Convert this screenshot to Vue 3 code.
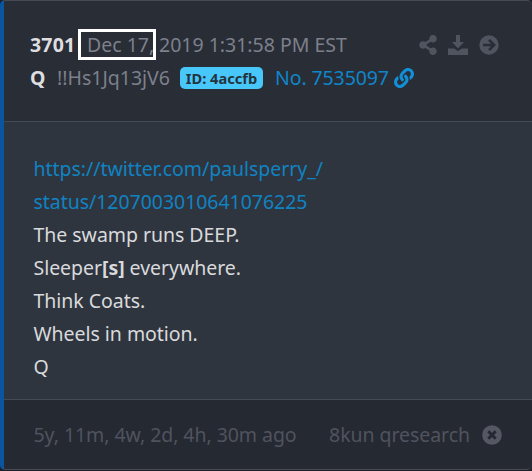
<script setup>
const post = {
  number: "3701",
  month: "Dec 17,",
  time: "2019 1:31:58 PM EST",
  name: "Q",
  trip: "!!Hs1Jq13jV6",
  id: "4accfb",
  no: "7535097",
  age: "5y, 11m, 4w, 2d, 4h, 30m ago",
  board: "8kun qresearch",
};
const link = ["https://twitter.com/paulsperry_/", "status/1207003010641076225"];
</script>

<template>
  <article class="post">
    <header class="head">
      <div class="row">
        <b class="number">{{ post.number }}</b>
        <span class="marked">{{ post.month }}</span>
        <span class="time">{{ post.time }}</span>
        <div class="actions">
          <svg class="share" viewBox="0 0 448 512">
            <path d="M352 320c-22.600 0-43.400 7.800-59.800 20.900l-102.500-64.100a96.600 96.600 0 0 0 0-41.600l102.500-64.100C308.600 184.200 329.400 192 352 192c53 0 96-43 96-96S405 0 352 0s-96 43-96 96c0 7.200.8 14.100 2.300 20.800l-102.500 64.100C139.400 167.800 118.600 160 96 160c-53 0-96 43-96 96s43 96 96 96c22.600 0 43.400-7.800 59.800-20.900l102.500 64.100A96 96 0 1 0 352 320z" />
          </svg>
          <svg class="download" viewBox="0 0 20 20">
            <path d="M8 0h4v7h4l-6 6.500-6-6.500h4zM0 13.500h6l4 2.500 4-2.500h6v6.500H0z" />
          </svg>
          <svg class="arrow" viewBox="0 0 20 20">
            <circle cx="10" cy="10" r="9.700" />
            <path class="cut" d="M4 10h11M10 4.800l5.200 5.200-5.200 5.200" />
          </svg>
        </div>
      </div>
      <div class="row">
        <b class="name">{{ post.name }}</b>
        <span class="trip">{{ post.trip }}</span>
        <span class="badge">ID: {{ post.id }}</span>
        <a class="no">No. {{ post.no }}</a>
        <svg class="chain" viewBox="0 0 512 512">
          <path d="M326.612 185.391c59.747 59.809 58.927 155.698.36 214.590-.11.120-.240.250-.36.370l-67.200 67.200c-59.270 59.270-155.699 59.262-214.960 0-59.270-59.260-59.270-155.700 0-214.960l37.106-37.106c9.840-9.840 26.786-3.300 27.294 10.606.648 17.722 3.826 35.527 9.690 52.721 1.986 5.822.567 12.262-3.783 16.612l-13.087 13.087c-28.026 28.026-28.905 73.660-1.155 101.960 28.024 28.579 74.086 28.749 102.325.51l67.200-67.190c28.191-28.191 28.073-73.757 0-101.830-3.701-3.694-7.429-6.564-10.341-8.569a16.037 16.037 0 0 1-6.947-12.606c-.396-10.567 3.348-21.456 11.698-29.806l21.054-21.055c5.521-5.521 14.182-6.199 20.584-1.731a152.482 152.482 0 0 1 20.522 17.197zM467.547 44.449c-59.261-59.262-155.690-59.270-214.960 0l-67.200 67.200c-.12.120-.250.250-.36.370-58.566 58.892-59.387 154.781.36 214.590a152.454 152.454 0 0 0 20.521 17.196c6.402 4.468 15.064 3.789 20.584-1.731l21.054-21.055c8.350-8.350 12.094-19.239 11.698-29.806a16.037 16.037 0 0 0-6.947-12.606c-2.912-2.005-6.640-4.875-10.341-8.569-28.073-28.073-28.191-73.639 0-101.830l67.200-67.190c28.239-28.239 74.300-28.069 102.325.51 27.750 28.300 26.872 73.934-1.155 101.960l-13.087 13.087c-4.350 4.350-5.769 10.790-3.783 16.612 5.864 17.194 9.042 34.999 9.690 52.721.509 13.906 17.454 20.446 27.294 10.606l37.106-37.106c59.271-59.259 59.271-155.699.001-214.959z" />
        </svg>
      </div>
    </header>

    <section class="body">
      <a v-for="part in link" :key="part" class="line">{{ part }}</a>
      <p class="line">The swamp runs DEEP.</p>
      <p class="line">Sleeper<b>[s]</b> everywhere.</p>
      <p class="line">Think Coats.</p>
      <p class="line">Wheels in motion.</p>
      <p class="line">Q</p>
    </section>

    <footer class="foot">
      <span class="age">{{ post.age }}</span>
      <span class="board">{{ post.board }}</span>
      <svg class="close" viewBox="0 0 20 20">
        <circle cx="10" cy="10" r="9.800" />
        <path class="cut" d="M6.300 6.300l7.400 7.400M13.700 6.300l-7.400 7.400" />
      </svg>
    </footer>
  </article>
</template>

<style>
body {
  margin: 0;
  background: #1e2028;
}
</style>

<style scoped>
.post {
  box-sizing: border-box;
  height: 470px;
  display: flex;
  flex-direction: column;
  overflow: hidden;
  border-left: 4px solid #0b55a0;
  border-top: 1px solid #454a54;
  border-bottom: 1px solid #454a54;
  border-radius: 5px;
  background: #2f353f;
  color: #d9dadc;
  font-family: "Noto Sans", sans-serif;
  font-size: 19.5px;
  line-height: 33px;
  white-space: nowrap;
}

.head {
  box-sizing: border-box;
  height: 121px;
  padding: 27px 33px 0 26px;
  border-bottom: 1px solid #454b55;
  background: #292d36;
  color: #7d808c;
}

.row {
  display: flex;
  align-items: center;
  height: 33px;
}

.number,
.name {
  color: #dedee0;
}

.number {
  width: 48px;
  letter-spacing: 0.2px;
}

/* white frame round the date */
.marked {
  box-sizing: border-box;
  width: 78px;
  height: 31px;
  padding-left: 6px;
  border: 3px solid #fff;
  line-height: 26px;
}

.time {
  margin-left: 3px;
}

.actions {
  display: flex;
  align-items: center;
  gap: 11px;
  margin-left: auto;
}

svg {
  flex: none;
  width: 20px;
  height: 20px;
  fill: #50545f;
}

.share {
  width: 18px;
}

.cut {
  fill: none;
  stroke: #292d36;
  stroke-width: 2.6;
}

.name {
  width: 27px;
}

.trip {
  width: 123px;
}

.badge {
  box-sizing: border-box;
  width: 83px;
  height: 22px;
  border-radius: 5px;
  background: #48c7fb;
  color: #23343f;
  font-size: 14.6px;
  font-weight: bold;
  line-height: 23px;
  text-align: center;
}

.no {
  width: 119px;
  margin-left: 12px;
  color: #0f86ca;
  letter-spacing: -0.1px;
}

.chain {
  fill: #128fd6;
}

.body {
  box-sizing: border-box;
  height: 277px;
  padding: 30px 30px 0 29.5px;
  letter-spacing: -0.04px;
}

.line {
  display: block;
  margin: 0;
}

a.line {
  color: #0f83c2;
}

.foot {
  box-sizing: border-box;
  flex: 1;
  display: flex;
  align-items: center;
  padding: 0 30px 0 29.5px;
  border-top: 1px solid #454b55;
  background: #252932;
  color: #50535e;
  letter-spacing: -0.06px;
}

.board {
  margin-left: auto;
}

.close {
  margin-left: 12px;
  fill: #555863;
}

.close .cut {
  stroke: #252932;
  stroke-width: 3;
}
</style>
